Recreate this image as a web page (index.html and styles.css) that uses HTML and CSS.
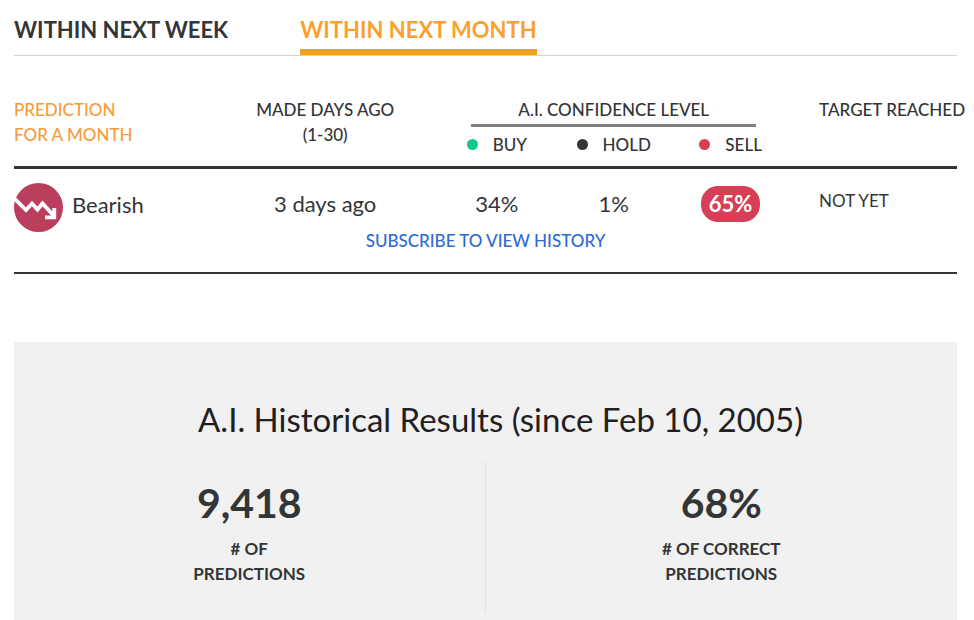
FILE: index.html
```html
<!DOCTYPE html>
<html lang="en">
<head>
<meta charset="utf-8">
<title>A.I. Predictions</title>
<link rel="stylesheet" href="styles.css">
</head>
<body>
<main class="page">
  <nav class="tabs">
    <a class="tab" href="#week">WITHIN NEXT WEEK</a>
    <a class="tab tab-active" href="#month" aria-current="page">WITHIN NEXT MONTH</a>
  </nav>

  <table class="predictions">
    <colgroup>
      <col class="col-prediction">
      <col class="col-made">
      <col class="col-level">
      <col class="col-level">
      <col class="col-level">
      <col>
    </colgroup>
    <thead>
      <tr>
        <th class="accent" rowspan="2">PREDICTION<br>FOR A MONTH</th>
        <th class="center" rowspan="2">MADE DAYS AGO<br>(1-30)</th>
        <th class="center" colspan="3"><div class="group">A.I. CONFIDENCE LEVEL</div></th>
        <th class="target" rowspan="2">TARGET REACHED</th>
      </tr>
      <tr class="levels">
        <th><span class="level"><i class="dot buy"></i>BUY</span></th>
        <th><span class="level"><i class="dot hold"></i>HOLD</span></th>
        <th><span class="level"><i class="dot sell"></i>SELL</span></th>
      </tr>
    </thead>
    <tbody>
      <tr class="result">
        <td class="trend-cell">
          <div class="trend">
            <svg class="trend-icon" viewBox="0 0 49 49" aria-hidden="true">
              <circle cx="24.500" cy="24.500" r="24.500" fill="#b93f5d"/>
              <path d="M1 16 L12 27 L18 20.500 L23.500 26.500 L28.500 20.500 L40 33" fill="none" stroke="#fff" stroke-width="3.800"/>
              <path d="M31 34.300 H40.300 V25" fill="none" stroke="#fff" stroke-width="3.800"/>
            </svg>
            <span class="trend-name">Bearish</span>
          </div>
        </td>
        <td class="center">3 days ago</td>
        <td class="center">34%</td>
        <td class="center">1%</td>
        <td class="center"><span class="pill">65%</span></td>
        <td class="target status">NOT YET</td>
      </tr>
      <tr>
        <td class="subscribe" colspan="6"><a href="#subscribe">SUBSCRIBE TO VIEW HISTORY</a></td>
      </tr>
    </tbody>
  </table>

  <section class="history">
    <h2>A.I. Historical Results (since Feb 10, 2005)</h2>
    <div class="stats">
      <div class="stat">
        <div class="number">9,418</div>
        <div class="caption"># OF<br>PREDICTIONS</div>
      </div>
      <div class="stat">
        <div class="number">68%</div>
        <div class="caption"># OF CORRECT<br>PREDICTIONS</div>
      </div>
    </div>
  </section>
</main>
</body>
</html>
```
FILE: styles.css
```css
* {
  box-sizing: border-box;
}

body {
  margin: 0;
  background: #fff;
  color: #333537;
  font-family: Lato, "Liberation Sans", sans-serif;
}

.page {
  padding: 13px 17px 0 14px;
}

.tabs {
  display: flex;
  gap: 72px;
  border-bottom: 1px solid #d2d2d2;
}

.tab {
  padding-bottom: 2px;
  border-bottom: 6px solid transparent;
  color: inherit;
  font-size: 22px;
  font-weight: 700;
  line-height: 34px;
  text-decoration: none;
}

.tab-active {
  border-color: #eea320;
  color: #f9a12f;
}

.predictions {
  width: 100%;
  margin-top: 41px;
  border-collapse: separate;
  border-spacing: 0;
  border-bottom: 2px solid #333537;
  table-layout: fixed;
}

.col-prediction { width: 21%; }
.col-made { width: 24%; }
.col-level { width: 12.4%; }

th,
td {
  padding: 0;
  text-align: left;
  vertical-align: top;
}

th {
  font-size: 17px;
  font-weight: 500;
  line-height: 25px;
  white-space: nowrap;
}

th[rowspan],
.levels th {
  border-bottom: 3px solid #333537;
}

.accent {
  color: #f79c3c;
}

.center {
  text-align: center;
}

.group {
  margin: 0 33px;
  padding-bottom: 2px;
  border-bottom: 3px solid #808080;
}

.levels th {
  padding: 4px 0 9px;
  text-align: center;
}

.level {
  display: inline-flex;
  align-items: center;
  gap: 15px;
}

.dot {
  width: 11px;
  height: 11px;
  border-radius: 50%;
}

.buy { background: #14c88c; }
.hold { background: #333537; }
.sell { background: #d63f55; }

.target {
  padding-left: 30px;
}

.result td {
  padding-top: 17px;
  font-size: 22px;
  line-height: 36px;
}

.result .trend-cell {
  padding-top: 14px;
}

.trend {
  display: flex;
  gap: 9px;
}

.trend-icon {
  width: 49px;
  height: 49px;
}

.trend-name {
  line-height: 43px;
}

.pill {
  display: inline-block;
  padding: 0 8px;
  border-radius: 17px;
  background: #d63f55;
  color: #fff;
  font-weight: 700;
}

.result .status {
  font-size: 17px;
  line-height: 30px;
}

.subscribe {
  padding-bottom: 22px;
  font-size: 17px;
  font-weight: 500;
  line-height: 18px;
  text-align: center;
}

.subscribe a {
  color: #2e6bd3;
  text-decoration: none;
}

.history {
  margin-top: 68px;
  padding: 56px 0 7px;
  background: #f1f1f1;
}

.history h2 {
  margin: 0 0 21px;
  padding-left: 30px;
  color: #1f2022;
  font-size: 33px;
  font-weight: 400;
  line-height: 42px;
  text-align: center;
}

.stats {
  display: grid;
  grid-template-columns: 1fr 1fr;
}

.stat {
  padding: 18px 0 27px;
  text-align: center;
}

.stat:first-child {
  border-right: 1px solid #e2e2e2;
}

.number {
  margin-bottom: 9px;
  font-size: 41px;
  font-weight: 700;
  line-height: 48px;
}

.caption {
  font-size: 17px;
  font-weight: 700;
  line-height: 25px;
}
```
